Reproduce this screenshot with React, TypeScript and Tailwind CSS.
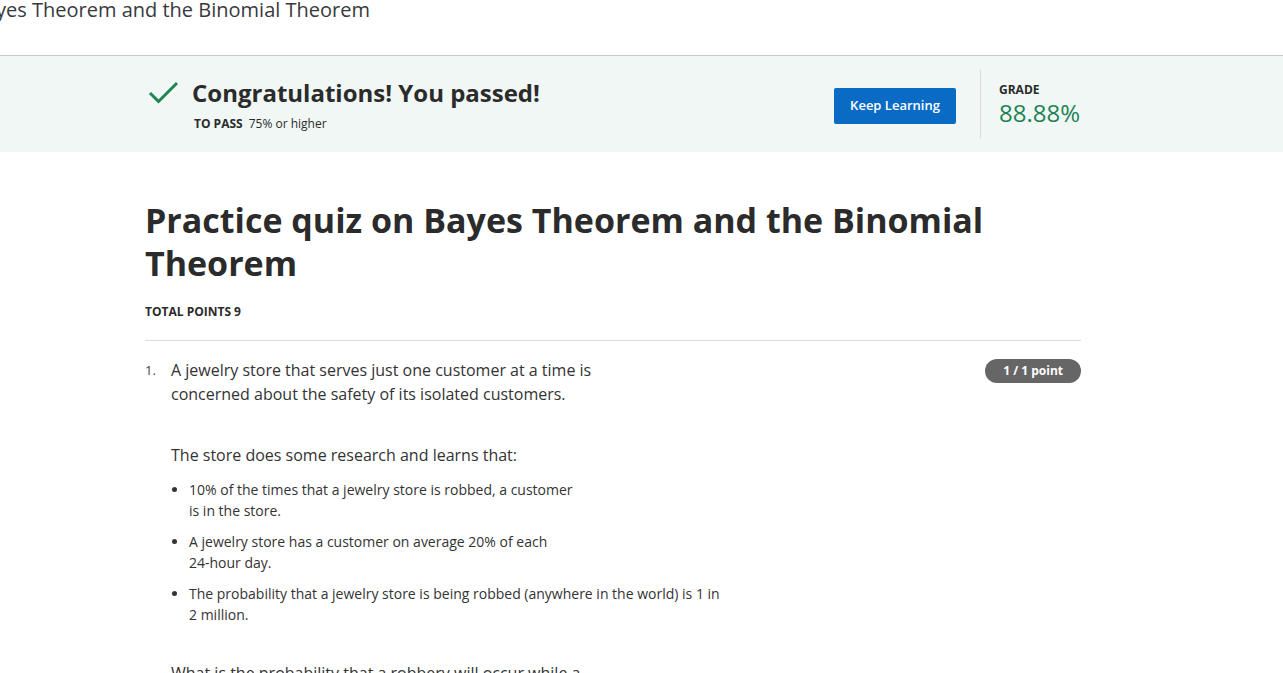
import React from "react";

export default function App() {
  const font = { fontFamily: '"Open Sans", "Noto Sans", sans-serif' };
  return (
    <div className="w-[1283px] h-[673px] overflow-hidden bg-white text-[#333]" style={font}>
      <div className="h-[56px] border-b border-[#c8c8c8] overflow-hidden">
        <div className="ml-[-28px] mt-[-5px] text-[20px] leading-[30px] text-[#373a3c] whitespace-nowrap">
          Bayes Theorem and the Binomial Theorem
        </div>
      </div>
      <div className="h-[96px] bg-[#f0f7f5]">
        <div className="w-[936px] ml-[145px] flex items-start h-full">
          <div className="flex-1 flex items-start pt-[21px]">
            <svg width="34" height="30" viewBox="0 0 34 30" className="mt-[1px] mr-[11px] ml-[2px]">
              <path d="M3 15 L11.5 23.5 L30 5" fill="none" stroke="#1f8354" strokeWidth="3" />
            </svg>
            <div>
              <div className="text-[24px] font-bold leading-[32px] text-[#2b2b2b]">Congratulations! You passed!</div>
              <div className="text-[12px] leading-[18px] mt-[6px] ml-[2px] text-[#2b2b2b]">
                <span className="font-bold">TO PASS</span>
                <span className="ml-[6px]">75% or higher</span>
              </div>
            </div>
          </div>
          <button className="w-[122px] h-[36px] bg-[#0a6bc4] text-white text-[13px] font-semibold rounded-[2px] mr-[24px] mt-[32px]">
            Keep Learning
          </button>
          <div className="w-px h-[68px] bg-[#d9d9d9] mt-[14px]" />
          <div className="w-[100px] pl-[18px] mt-[26px]">
            <div className="text-[12px] font-bold leading-[16px] text-[#2b2b2b]">GRADE</div>
            <div className="text-[24px] leading-[30px] text-[#1f8354]">88.88%</div>
          </div>
        </div>
      </div>
      <div className="w-[936px] ml-[145px]">
        <h1 className="mt-[47px] text-[34px] font-bold leading-[43px] text-[#2b2b2b]">
          Practice quiz on Bayes Theorem and the Binomial Theorem
        </h1>
        <div className="mt-[18px] text-[12px] font-bold leading-[18px] text-[#2b2b2b]">TOTAL POINTS 9</div>
        <div className="mt-[19px] h-px bg-[#dcdcdc]" />
        <div className="flex mt-[17px]">
          <div className="w-[26px] text-[13px] leading-[24px] text-[#444]">1.</div>
          <div className="flex-1">
            <div className="flex justify-between items-start">
              <div className="text-[16px] leading-[24px] text-[#333]">
                A jewelry store that serves just one customer at a time is
                <br />
                concerned about the safety of its isolated customers.
              </div>
              <span className="mt-[1px] h-[24px] px-[18px] rounded-full bg-[#666] text-white text-[12px] font-bold leading-[24px]">
                1 / 1 point
              </span>
            </div>
            <div className="mt-[37px] text-[16px] leading-[24px] text-[#333]">
              The store does some research and learns that:
            </div>
            <ul className="mt-[12px] text-[14px] leading-[21px] text-[#333] list-disc pl-[18px] space-y-[10px]">
              <li>
                10% of the times that a jewelry store is robbed, a customer
                <br />
                is in the store.
              </li>
              <li>
                A jewelry store has a customer on average 20% of each
                <br />
                24-hour day.
              </li>
              <li>
                The probability that a jewelry store is being robbed (anywhere in the world) is 1 in
                <br />
                2 million.
              </li>
            </ul>
            <div className="mt-[36px] text-[16px] leading-[24px] text-[#333]">
              What is the probability that a robbery will occur while a
            </div>
          </div>
        </div>
      </div>
    </div>
  );
}
